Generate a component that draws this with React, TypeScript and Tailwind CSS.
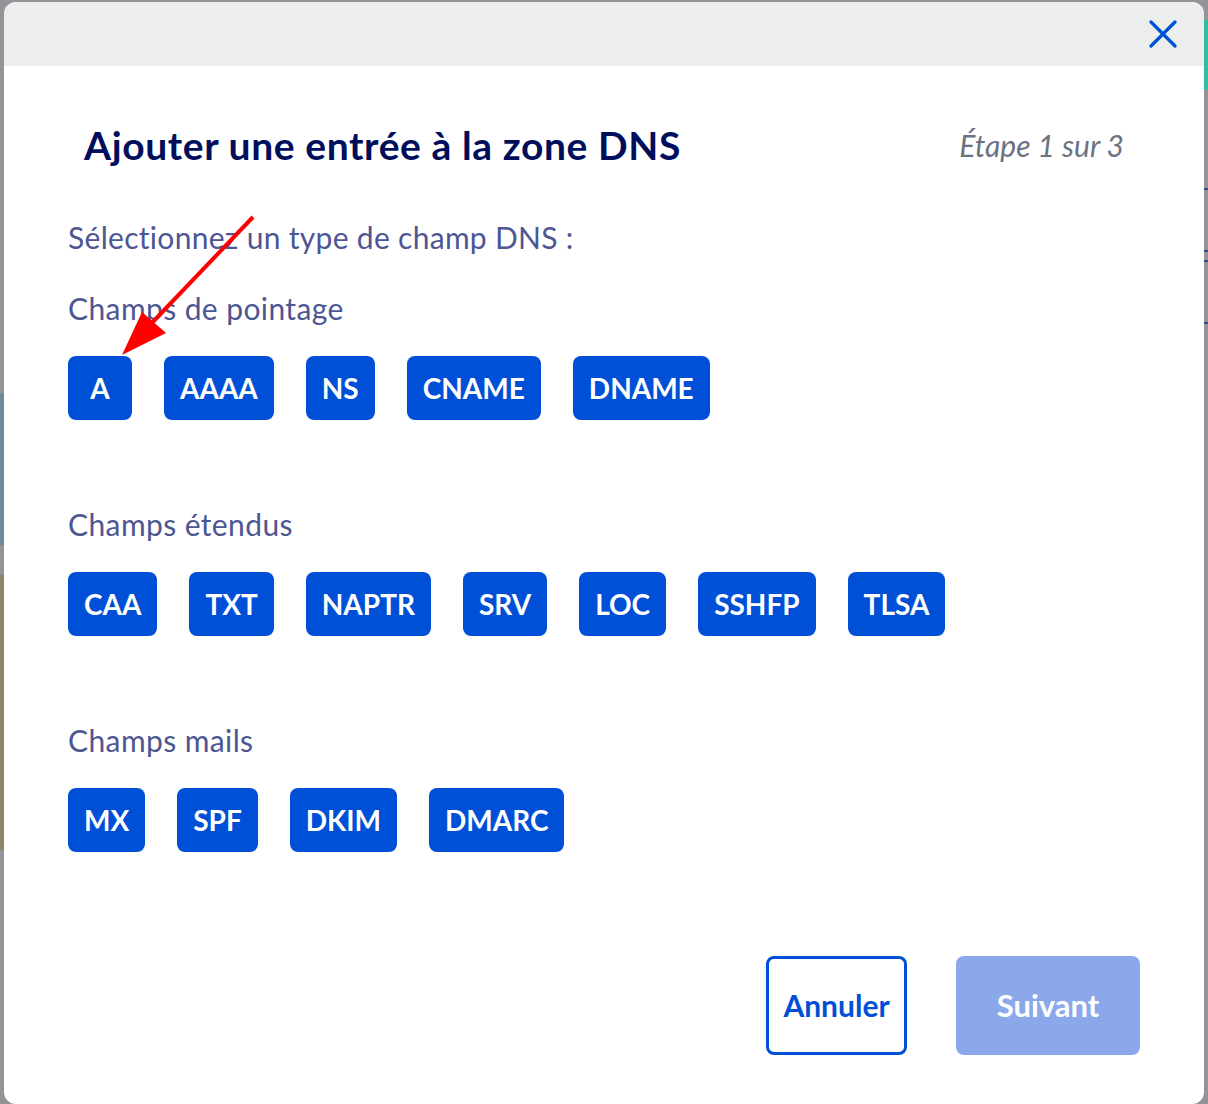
import React from "react"

const groups: { label: string; types: string[] }[] = [
  { label: "Champs de pointage", types: ["A", "AAAA", "NS", "CNAME", "DNAME"] },
  { label: "Champs étendus", types: ["CAA", "TXT", "NAPTR", "SRV", "LOC", "SSHFP", "TLSA"] },
  { label: "Champs mails", types: ["MX", "SPF", "DKIM", "DMARC"] },
]

function TypeButton({ label }: { label: string }) {
  return (
    <button className="h-[64px] min-w-[64px] px-4 rounded-[8px] bg-[#0050d7] text-white text-[28px] font-bold leading-none">
      {label}
    </button>
  )
}

export default function App() {
  return (
    <div
      className="relative w-[1208px] h-[1104px] overflow-hidden bg-[#939398] flex"
      style={{ fontFamily: "Lato, 'Open Sans', sans-serif" }}
    >
      {/* page peeking out behind the modal */}
      <div className="w-[4px] flex flex-col">
        <div className="h-[393px]" />
        <div className="h-[152px] bg-[#6f8a99]" />
        <div className="h-[30px]" />
        <div className="h-[275px] bg-[#8c8566]" />
      </div>

      <div className="flex-1 mt-[2px] rounded-[12px] bg-white overflow-hidden flex flex-col">
        <div className="h-[64px] shrink-0 bg-[#eceeed] flex items-center justify-end pr-[27px]">
          <svg width="28" height="28" viewBox="0 0 28 28" fill="none" stroke="#0050d7" strokeWidth="3.2" strokeLinecap="round">
            <path d="M2 2 L26 26 M26 2 L2 26" />
          </svg>
        </div>

        <div className="px-[64px]">
          <div className="mt-[55px] flex items-center justify-between pl-[16px] pr-[16px]">
            <h1 className="text-[39px] leading-[48px] font-bold tracking-[0.6px] text-[#000e5c]">
              Ajouter une entrée à la zone DNS
            </h1>
            <span className="text-[30px] leading-[48px] italic text-[#6b7282]">Étape 1 sur 3</span>
          </div>

          <p className="mt-[50px] text-[30px] leading-[36px] tracking-[0.3px] text-[#4d5693]">
            Sélectionnez un type de champ DNS :
          </p>

          {groups.map((g, i) => (
            <div key={g.label} className={i === 0 ? "mt-[35px]" : "mt-[86px]"}>
              <p className="text-[30px] leading-[36px] tracking-[0.4px] text-[#4d5693]">{g.label}</p>
              <div className="mt-[30px] flex gap-[32px]">
                {g.types.map((t) => (
                  <TypeButton key={t} label={t} />
                ))}
              </div>
            </div>
          ))}

          <div className="mt-[104px] flex justify-end gap-[49px]">
            <button className="w-[141px] h-[99px] rounded-[8px] border-[3px] border-[#0050d7] bg-white text-[#0050d7] text-[30px] font-bold">
              Annuler
            </button>
            <button className="w-[184px] h-[99px] rounded-[8px] bg-[#8aa8ea] text-white text-[31px] font-bold">
              Suivant
            </button>
          </div>
        </div>
      </div>

      <div className="w-[4px] flex flex-col">
        <div className="h-[20px]" />
        <div className="h-[70px] bg-[#2fbfa0]" />
        <div className="h-[98px]" />
        <div className="h-[2px] bg-[#3a4a8a]" />
        <div className="h-[60px]" />
        <div className="h-[2px] bg-[#3a4a8a]" />
        <div className="h-[8px]" />
        <div className="h-[2px] bg-[#3a4a8a]" />
        <div className="h-[60px]" />
        <div className="h-[2px] bg-[#3a4a8a]" />
      </div>

      {/* red annotation arrow */}
      <svg className="absolute left-0 top-0 pointer-events-none" width="1208" height="1104">
        <line x1="253" y1="217" x2="148" y2="327" stroke="#ff0000" strokeWidth="4" />
        <polygon points="122,355 142,312 166,333" fill="#ff0000" />
      </svg>
    </div>
  )
}
